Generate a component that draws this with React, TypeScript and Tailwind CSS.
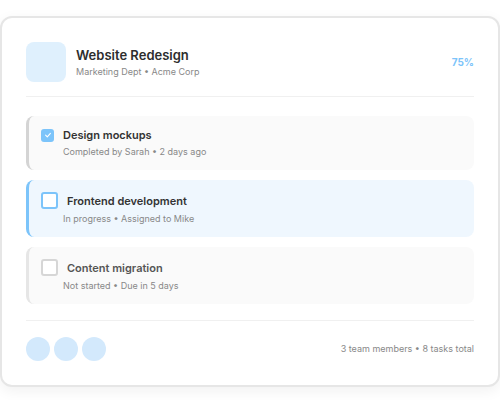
import React from 'react';

type Status = 'done' | 'active' | 'todo';

interface Task {
  title: string;
  meta: string;
  status: Status;
}

const tasks: Task[] = [
  { title: 'Design mockups', meta: 'Completed by Sarah • 2 days ago', status: 'done' },
  { title: 'Frontend development', meta: 'In progress • Assigned to Mike', status: 'active' },
  { title: 'Content migration', meta: 'Not started • Due in 5 days', status: 'todo' },
];

const CheckBox: React.FC<{ status: Status }> = ({ status }) => {
  if (status === 'done') {
    return (
      <div className="w-[13px] h-[13px] rounded-[3px] bg-[#7cc4fa] flex items-center justify-center">
        <svg width="8" height="8" viewBox="0 0 8 8" fill="none">
          <path d="M1.6 4.2 3.3 5.8 6.4 2.3" stroke="white" strokeWidth="1.1" strokeLinecap="round" strokeLinejoin="round" />
        </svg>
      </div>
    );
  }
  return (
    <div
      className={
        status === 'active'
          ? 'w-[17px] h-[17px] rounded-[3px] border-2 border-[#7cc4fa] bg-white'
          : 'w-[17px] h-[17px] rounded-[3px] border-2 border-[#d6d6d6] bg-white'
      }
    />
  );
};

const TaskRow: React.FC<{ task: Task }> = ({ task }) => {
  const box =
    task.status === 'active'
      ? 'bg-[#eff7fe] border-l-[3px] border-[#7cc4fa]'
      : task.status === 'done'
      ? 'bg-[#fafafa] border-l-[3px] border-[#d4d4d4]'
      : 'bg-[#fafafa] border-l-[3px] border-[#e6e6e6]';

  return (
    <div className={`rounded-lg px-3 py-3 ${box}`}>
      <div className="flex items-center gap-[9px]">
        <CheckBox status={task.status} />
        <span
          className={
            task.status === 'todo'
              ? 'text-[11px] leading-[14px] font-semibold text-[#555]'
              : 'text-[11px] leading-[14px] font-semibold text-[#333]'
          }
        >
          {task.title}
        </span>
      </div>
      <div className="mt-[4px] pl-[22px] text-[9px] leading-[12px] text-[#888]">{task.meta}</div>
    </div>
  );
};

export default function App() {
  return (
    <div className="w-[500px] h-[400px] bg-white pt-4" style={{ fontFamily: 'Inter, "Liberation Sans", sans-serif' }}>
      <div className="w-full bg-white border-2 border-[#e6e6e6] rounded-xl p-6 shadow-[0_4px_14px_rgba(0,0,0,0.06)]">
        <div className="flex items-center pb-[14px] border-b border-[#f0f0f0]">
          <div className="w-10 h-10 rounded-lg bg-[#dff0fd]" />
          <div className="ml-[10px] flex-1">
            <div className="text-[13px] leading-[17px] font-semibold text-[#2d2d2d]">Website Redesign</div>
            <div className="mt-[2px] text-[9px] leading-[12px] text-[#888]">Marketing Dept • Acme Corp</div>
          </div>
          <div className="text-[10px] font-bold text-[#7cc4fa]">75%</div>
        </div>

        <div className="mt-[19px] flex flex-col gap-[10px]">
          {tasks.map(t => (
            <TaskRow key={t.title} task={t} />
          ))}
        </div>

        <div className="mt-4 pt-4 border-t border-[#f0f0f0] flex items-center justify-between">
          <div className="flex gap-1">
            <div className="w-6 h-6 rounded-full bg-[#d3e9fc]" />
            <div className="w-6 h-6 rounded-full bg-[#d3e9fc]" />
            <div className="w-6 h-6 rounded-full bg-[#d3e9fc]" />
          </div>
          <div className="text-[9px] text-[#888]">3 team members • 8 tasks total</div>
        </div>
      </div>
    </div>
  );
}
